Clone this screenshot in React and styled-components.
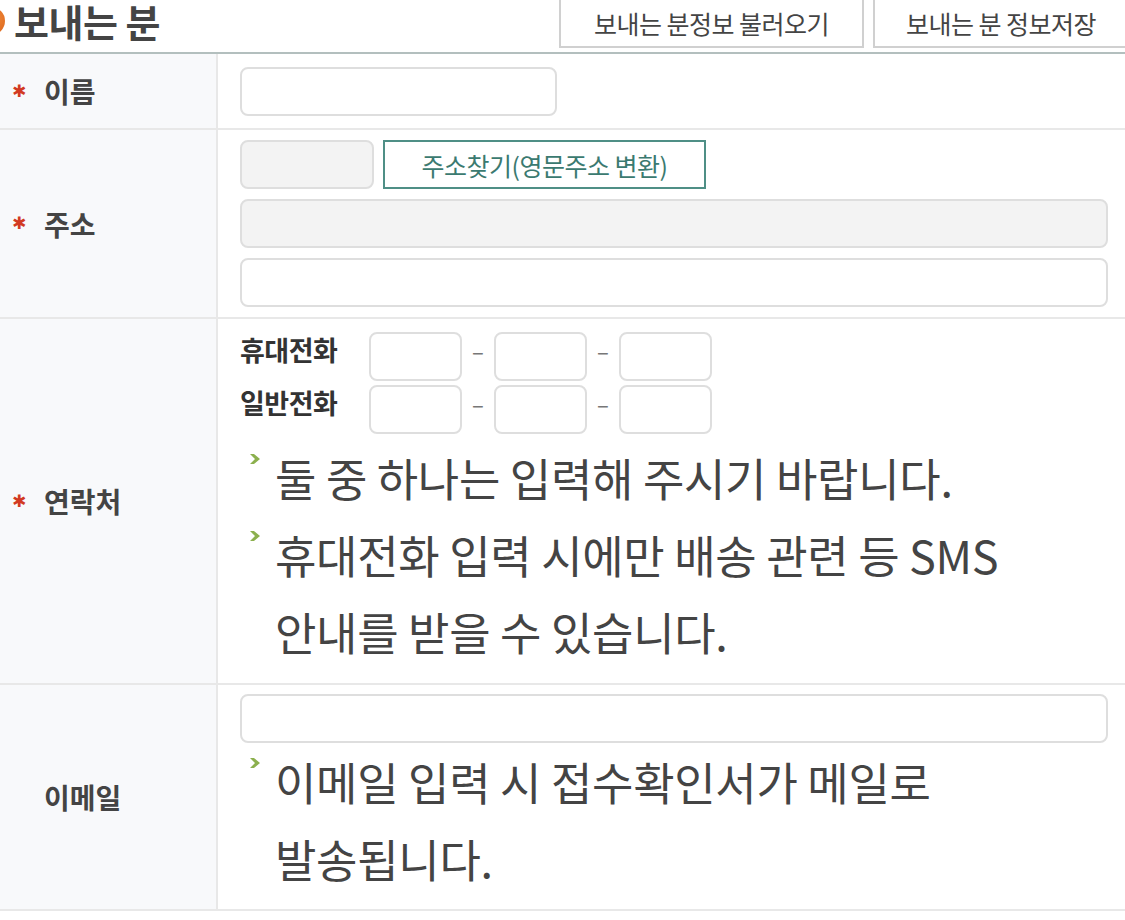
import React from "react"
import styled, { createGlobalStyle } from "styled-components"

const GlobalStyle = createGlobalStyle`
  body {
    margin: 0;
    background: #fff;
    font-family: "Noto Sans CJK KR", "Noto Sans", sans-serif;
    color: #444;
  }
`

const Page = styled.div`
  width: 1125px;
  overflow: hidden;
`

const Header = styled.div`
  display: flex;
  align-items: flex-start;
  height: 52px;
`

const Title = styled.h2`
  position: relative;
  margin: 0;
  padding-left: 14px;
  height: 42px;
  line-height: 42px;
  font-size: 38px;
  font-weight: 700;
  color: #444;
  letter-spacing: -0.5px;

  &::before {
    content: "";
    position: absolute;
    left: -23px;
    top: 7px;
    width: 28px;
    height: 28px;
    border-radius: 50%;
    background: radial-gradient(circle at 60% 40%, #f08a3a, #d55a12);
  }
`

const ButtonGroup = styled.div`
  display: flex;
  gap: 9px;
  margin-left: auto;
  margin-top: -2px;
  margin-right: -4px;
`

const HeaderButton = styled.button`
  width: ${(p) => p.$w}px;
  height: 50px;
  padding: 0;
  border: 2px solid #d0d0d0;
  background: #fff;
  color: #444;
  font-family: inherit;
  font-size: 25px;
  letter-spacing: -0.5px;
  white-space: nowrap;
`

const Table = styled.div`
  border-top: 2px solid #b3bfbe;
`

const Row = styled.div`
  display: grid;
  grid-template-columns: 218px 1fr;
  border-bottom: 2px solid #e8e8e8;
`

const LabelCell = styled.div`
  display: flex;
  align-items: center;
  padding-left: 12px;
  background: #f8f9fb;
  border-right: 2px solid #e8e8e8;
  font-size: 28px;
  font-weight: 700;
  color: #444;
`

const Star = styled.span`
  width: 32px;
  color: #d23a22;
  font-size: 17px;
  line-height: 1;
  font-family: "DejaVu Sans", sans-serif;
`

const Content = styled.div`
  display: flex;
  flex-direction: column;
  gap: ${(p) => p.$gap || 0}px;
  padding: ${(p) => p.$pt}px 17px ${(p) => p.$pb}px 22px;
`

const Line = styled.div`
  display: flex;
  align-items: center;
  gap: ${(p) => p.$gap || 0}px;
`

const Input = styled.input`
  box-sizing: border-box;
  width: ${(p) => (p.$w ? `${p.$w}px` : "100%")};
  height: 49px;
  border: 2px solid #dedede;
  border-radius: 8px;
  background: ${(p) => (p.$gray ? "#f3f3f3" : "#fff")};
  outline: none;
  flex-shrink: 0;
`

const FindButton = styled.button`
  width: 323px;
  height: 49px;
  padding: 0;
  border: 2px solid #4f8f86;
  background: #fff;
  color: #3b7a70;
  font-family: inherit;
  font-size: 25px;
  letter-spacing: -0.5px;
  white-space: nowrap;
`

const PhoneLabel = styled.span`
  width: 129px;
  align-self: flex-start;
  margin-top: -2px;
  font-size: 27px;
  font-weight: 700;
  color: #333;
  letter-spacing: -0.5px;
`

const Dash = styled.span`
  width: 32px;
  text-align: center;
  color: #777;
  font-size: 22px;
  margin-top: -14px;
`

const Note = styled.div`
  display: flex;
  font-size: 45px;
  line-height: 77px;
  color: #444;
  letter-spacing: -0.3px;
  word-break: keep-all;
`

const Bullet = styled.svg`
  flex: 0 0 35px;
  height: 12px;
  margin-top: 14px;
`

const NoteText = styled.div`
  flex: 1;
`

const Label = ({ required, children }) => (
  <LabelCell>
    <Star>{required ? "✱" : ""}</Star>
    {children}
  </LabelCell>
)

const Hint = ({ children }) => (
  <Note>
    <Bullet viewBox="0 0 35 12">
      <path d="M10 1 L14 1 L20 6 L14 11 L10 11 L15 6 Z" fill="#8cb04e" />
    </Bullet>
    <NoteText>{children}</NoteText>
  </Note>
)

const PhoneLine = ({ label }) => (
  <Line>
    <PhoneLabel>{label}</PhoneLabel>
    <Input $w={93} />
    <Dash>–</Dash>
    <Input $w={93} />
    <Dash>–</Dash>
    <Input $w={93} />
  </Line>
)

const App = () => {
  return (
    <Page>
      <GlobalStyle />
      <Header>
        <Title>보내는 분</Title>
        <ButtonGroup>
          <HeaderButton $w={305}>보내는 분정보 불러오기</HeaderButton>
          <HeaderButton $w={256}>보내는 분 정보저장</HeaderButton>
        </ButtonGroup>
      </Header>
      <Table>
        <Row>
          <Label required>이름</Label>
          <Content $pt={13} $pb={12}>
            <Input $w={317} />
          </Content>
        </Row>
        <Row>
          <Label required>주소</Label>
          <Content $pt={10} $pb={10} $gap={10}>
            <Line $gap={9}>
              <Input $w={134} $gray readOnly />
              <FindButton>주소찾기(영문주소 변환)</FindButton>
            </Line>
            <Input $gray readOnly />
            <Input />
          </Content>
        </Row>
        <Row>
          <Label required>연락처</Label>
          <Content $pt={13} $pb={13}>
            <PhoneLine label="휴대전화" />
            <div style={{ height: 4 }} />
            <PhoneLine label="일반전화" />
            <div style={{ height: 5 }} />
            <Hint>둘 중 하나는 입력해 주시기 바랍니다.</Hint>
            <Hint>휴대전화 입력 시에만 배송 관련 등 SMS 안내를 받을 수 있습니다.</Hint>
          </Content>
        </Row>
        <Row>
          <Label>이메일</Label>
          <Content $pt={9} $pb={12}>
            <Input />
            <Hint>이메일 입력 시 접수확인서가 메일로 발송됩니다.</Hint>
          </Content>
        </Row>
      </Table>
    </Page>
  )
}

export default App
